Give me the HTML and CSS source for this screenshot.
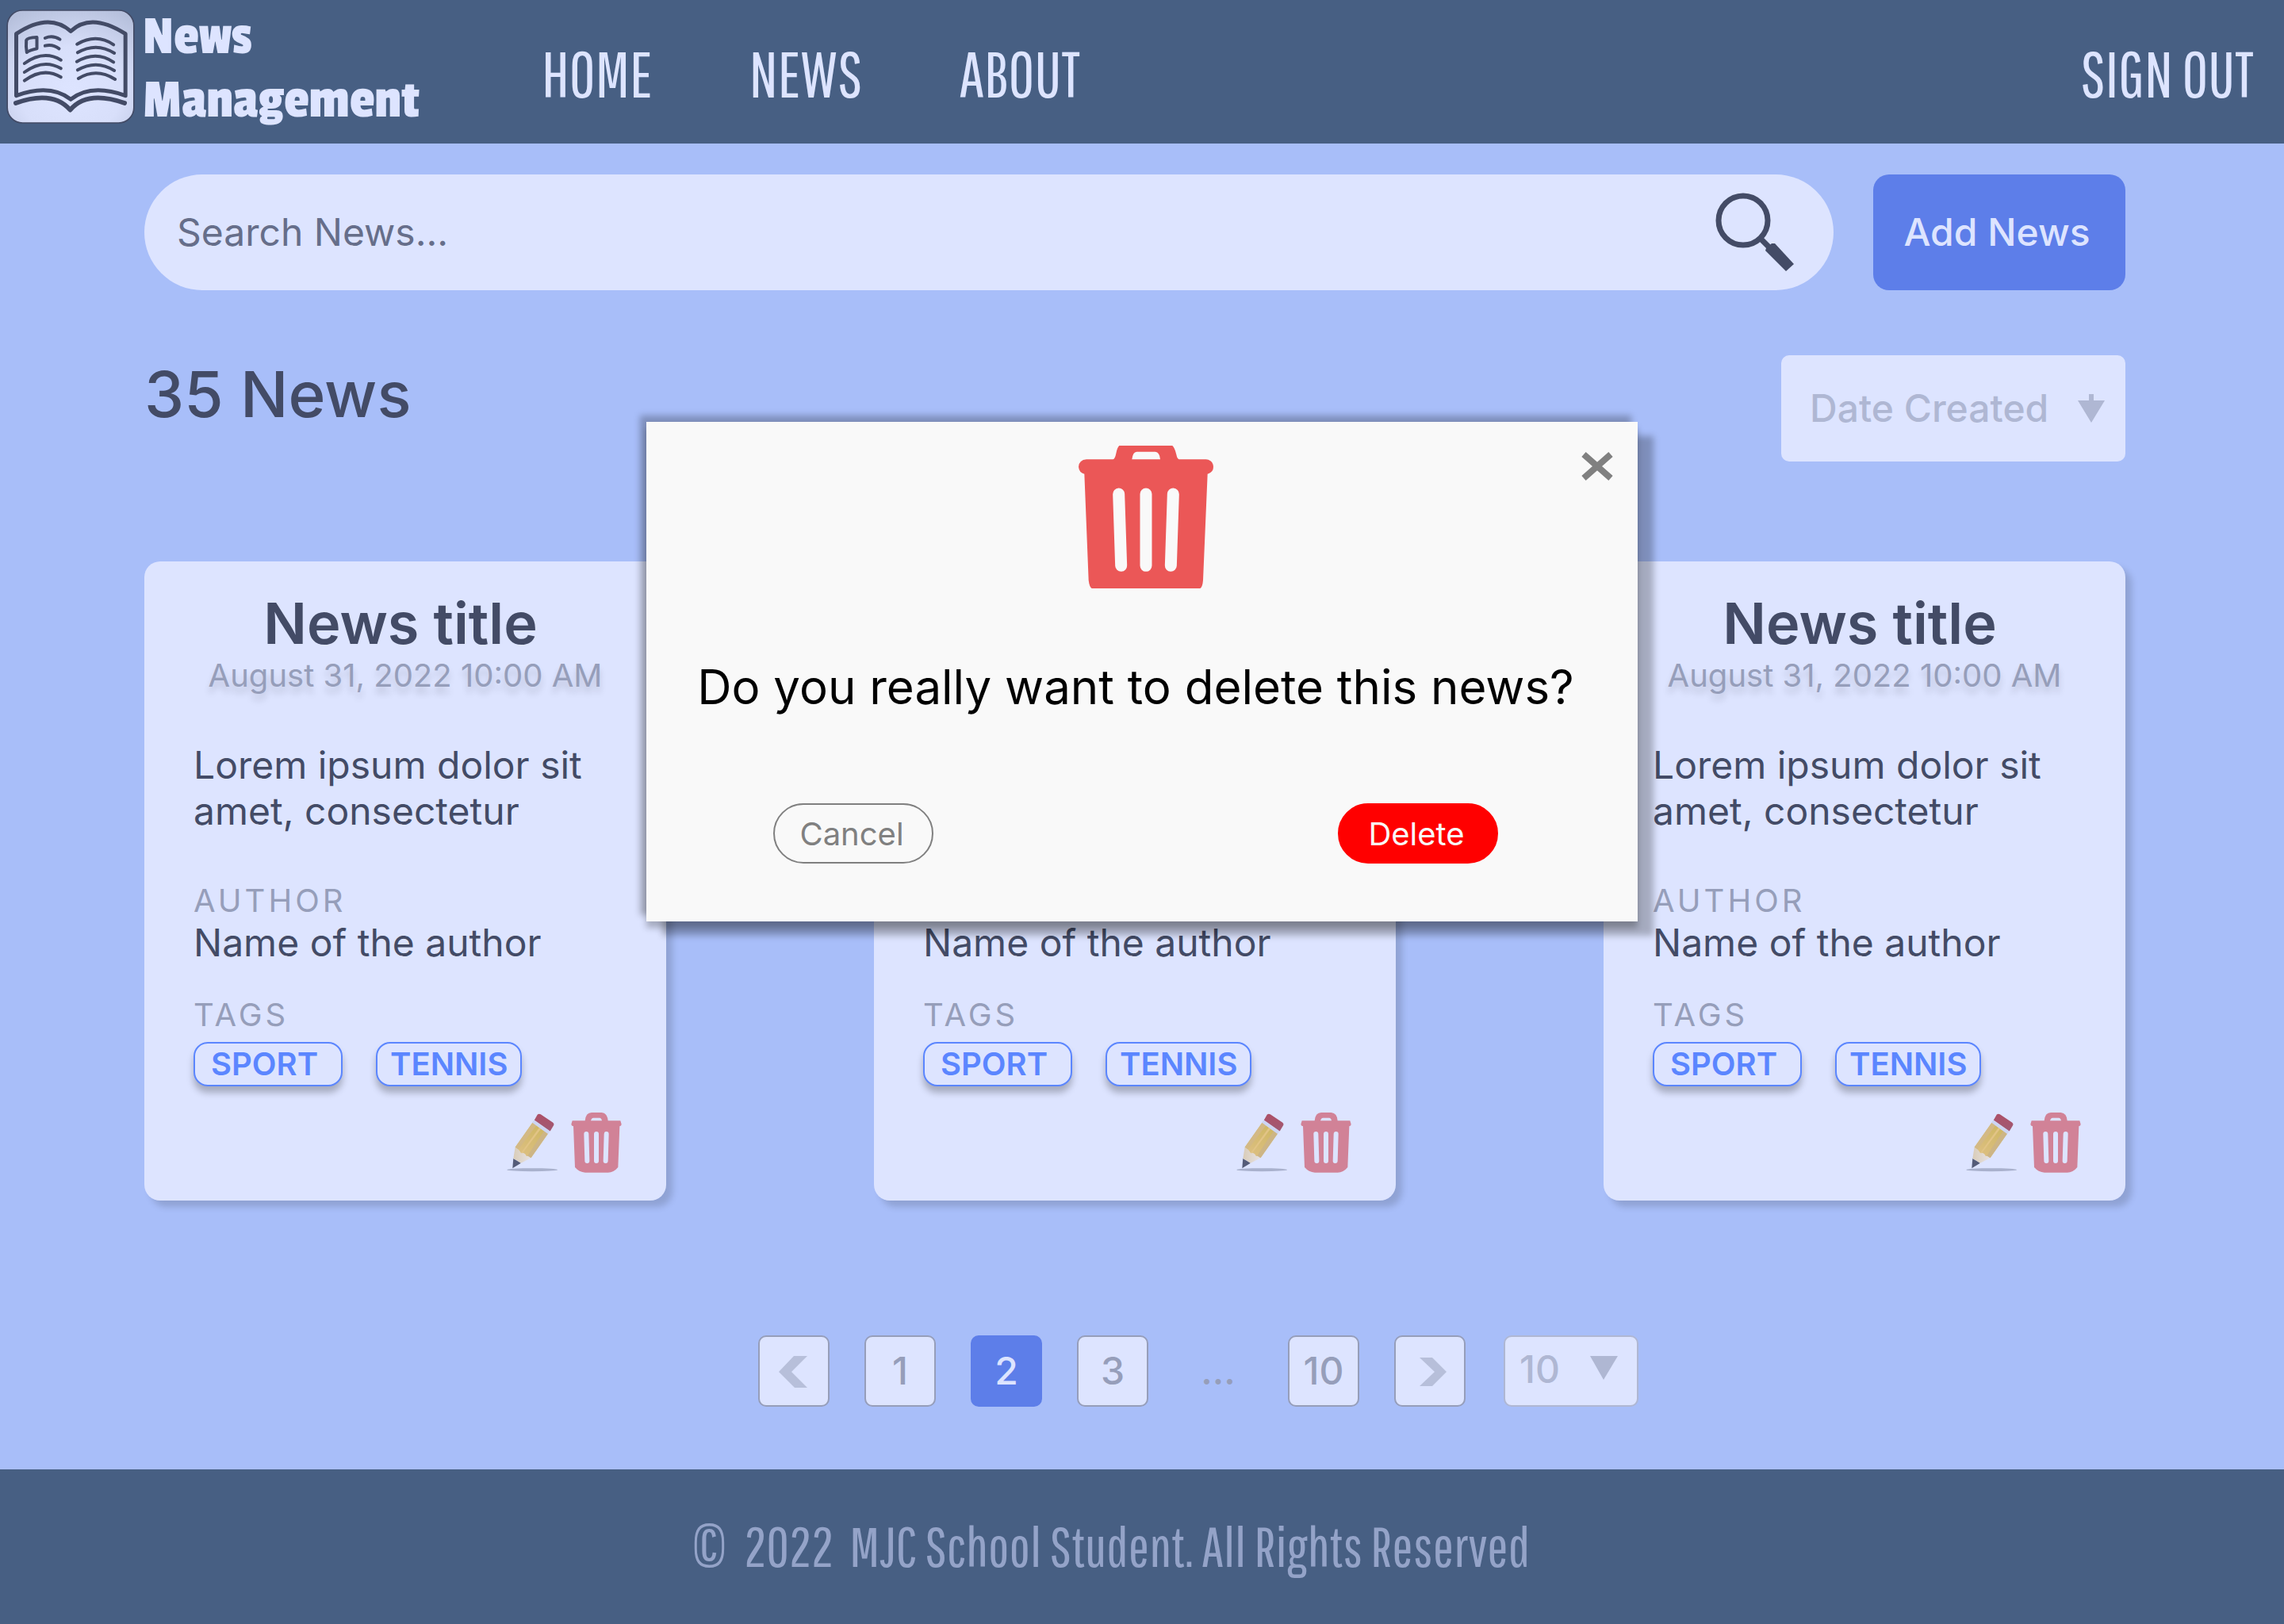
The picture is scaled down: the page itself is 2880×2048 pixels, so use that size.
FILE: index.html
```html
<!DOCTYPE html>
<html lang="en">
<head>
<meta charset="utf-8">
<meta name="viewport" content="width=device-width, initial-scale=1">
<title>News Management</title>
<link rel="stylesheet" href="styles.css">
</head>
<body>
<svg class="sprite" aria-hidden="true">
  <defs>
    <linearGradient id="wood" x1="0" y1="0" x2="1" y2="0"><stop offset="0" stop-color="#d9ccb8"/><stop offset="1" stop-color="#e6e2e4"/></linearGradient>
    <linearGradient id="shaft" gradientUnits="userSpaceOnUse" x1="185" y1="125" x2="115" y2="235"><stop offset="0" stop-color="#cfb765"/><stop offset="1" stop-color="#dcbf80"/></linearGradient>
    <linearGradient id="rubber" x1="0" y1="0" x2="0" y2="1"><stop offset="0" stop-color="#ad5067"/><stop offset="1" stop-color="#a05a74"/></linearGradient>
  </defs>
  <symbol id="pencil" viewBox="58 76 196 228">
    <ellipse cx="155" cy="293" rx="96" ry="6" fill="#a9b1cd"/>
    <path d="M83 250 112 268 80 287Z" fill="#555c78"/>
    <path d="M90 207 150 248 112 268Q98 256 83 250Z" fill="url(#wood)"/>
    <path d="M156 114 215 155 150 248Q144 238 133 241 126 227 112 229 106 216 90 207Z" fill="url(#shaft)"/>
    <path d="M156 114 171 124 102 216 90 207Z" fill="#d3b985"/>
    <path d="M200 145 215 155 150 248 137 240Z" fill="#cdb585"/>
    <path d="M182 132 188 137 118 230 112 229Z" fill="#e2c486"/>
    <path d="M161 104 222 147 215 157 155 114Z" fill="#ccd5f3"/>
    <path d="M175 83Q180 79 187 82L233 113Q239 117 237 123L223 146 163 104Z" fill="url(#rubber)"/>
  </symbol>
  <symbol id="bin" viewBox="300 64 192 232">
    <path fill-rule="evenodd" d="M308 97H353Q356 66 378 66H416Q438 68 440 97H487L491 110Q491 117 484 118L478 273Q462 293 440 293H354Q330 291 315 273L309 118Q301 117 301 110L305 97ZM375 97H417Q415 86 408 86H385Q377 87 375 97Z" fill="#d18297"/>
    <path d="M358 147 361 249M396 147V249M434 147 431 249" stroke="#dde4ff" stroke-width="18" stroke-linecap="round"/>
  </symbol>
</svg>

<header class="header">
  <a class="brand" href="#">
    <svg class="brand-icon" viewBox="25 36 485 432" aria-hidden="true">
      <defs><radialGradient id="page" cx=".5" cy=".72" r=".8"><stop offset="0" stop-color="#dde4ff"/><stop offset=".5" stop-color="#d8dffa"/><stop offset="1" stop-color="#b6c0dc"/></radialGradient></defs>
      <rect x="28" y="39" width="479" height="426" rx="58" fill="url(#page)" stroke="#434b66" stroke-width="5"/>
      <g fill="none" stroke="#434b66" stroke-linecap="round" stroke-linejoin="round">
        <path stroke-width="15" d="M62 362V128Q185 45 268 118Q345 45 475 128V362Q345 315 268 376Q190 315 62 362Z"/>
        <path stroke-width="17" d="M60 390Q200 340 266 416Q330 340 472 390"/>
        <path stroke-width="12" d="M100 152Q104 142 140 141V184Q112 190 102 198 98 178 100 152ZM171 144Q200 132 227 149M171 173Q200 166 224 184M93 240Q165 188 231 227M93 273Q165 221 231 259M93 305Q165 252 231 292M292 167Q365 125 430 169M294 199Q365 158 433 201M291 233Q365 190 430 235M294 265Q365 224 433 267M297 297Q365 255 436 300"/>
      </g>
    </svg>
    <span class="brand-name">News<br>Management</span>
  </a>
  <nav class="nav" aria-label="Main">
    <a href="#">HOME</a>
    <a href="#">NEWS</a>
    <a href="#">ABOUT</a>
  </nav>
  <a class="sign-out" href="#">SIGN OUT</a>
</header>

<main class="main">
  <div class="search-row">
    <form class="search" role="search">
      <input class="search-input" type="text" placeholder="Search News..." aria-label="Search news">
      <button class="icon-button" type="button" aria-label="Search">
        <svg width="102" height="102" viewBox="2162 242 102 102" aria-hidden="true">
          <circle cx="2198" cy="278" r="31" fill="none" stroke="#434b66" stroke-width="7"/>
          <path d="M2220 301 2234 315" stroke="#434b66" stroke-width="7"/>
          <path d="M2226 316 2227 313 2234 307 2238 307 2262 333 2252 342Z" fill="#434b66"/>
        </svg>
      </button>
    </form>
    <button class="add-button" type="button">Add News</button>
  </div>

  <div class="toolbar">
    <h1 class="count">35 News</h1>
    <div class="select-wrap sort">
      <select class="select" aria-label="Sort by"><option>Date Created</option></select>
      <svg class="select-arrow" width="34" height="36" viewBox="0 0 34 36" aria-hidden="true"><path d="M0 8H14V0H20V8H34L17 36Z" fill="#afb7d3"/></svg>
    </div>
  </div>

  <div class="cards">
    <article class="card">
      <h2 class="card-title">News title</h2>
      <time class="card-date">August 31, 2022 10:00 AM</time>
      <p class="card-text">Lorem ipsum dolor sit amet, consectetur</p>
      <h3 class="card-label">AUTHOR</h3>
      <p class="card-author">Name of the author</p>
      <h3 class="card-label">TAGS</h3>
      <ul class="tags"><li class="tag tag-wide">SPORT</li><li class="tag">TENNIS</li></ul>
      <div class="card-actions">
        <button class="icon-button" type="button" aria-label="Edit"><svg width="65" height="76"><use href="#pencil"/></svg></button>
        <button class="icon-button" type="button" aria-label="Delete"><svg width="64" height="78"><use href="#bin"/></svg></button>
      </div>
    </article>
    <article class="card">
      <h2 class="card-title">News title</h2>
      <time class="card-date">August 31, 2022 10:00 AM</time>
      <p class="card-text">Lorem ipsum dolor sit amet, consectetur</p>
      <h3 class="card-label">AUTHOR</h3>
      <p class="card-author">Name of the author</p>
      <h3 class="card-label">TAGS</h3>
      <ul class="tags"><li class="tag tag-wide">SPORT</li><li class="tag">TENNIS</li></ul>
      <div class="card-actions">
        <button class="icon-button" type="button" aria-label="Edit"><svg width="65" height="76"><use href="#pencil"/></svg></button>
        <button class="icon-button" type="button" aria-label="Delete"><svg width="64" height="78"><use href="#bin"/></svg></button>
      </div>
    </article>
    <article class="card">
      <h2 class="card-title">News title</h2>
      <time class="card-date">August 31, 2022 10:00 AM</time>
      <p class="card-text">Lorem ipsum dolor sit amet, consectetur</p>
      <h3 class="card-label">AUTHOR</h3>
      <p class="card-author">Name of the author</p>
      <h3 class="card-label">TAGS</h3>
      <ul class="tags"><li class="tag tag-wide">SPORT</li><li class="tag">TENNIS</li></ul>
      <div class="card-actions">
        <button class="icon-button" type="button" aria-label="Edit"><svg width="65" height="76"><use href="#pencil"/></svg></button>
        <button class="icon-button" type="button" aria-label="Delete"><svg width="64" height="78"><use href="#bin"/></svg></button>
      </div>
    </article>
  </div>

  <nav class="pagination" aria-label="Pages">
    <button class="page" type="button" aria-label="Previous page"><svg width="86" height="86" viewBox="2 2 86 86" aria-hidden="true"><path d="M45 26H62L42 46 62 66H46L26 46Z" fill="#b7bfda"/></svg></button>
    <button class="page" type="button">1</button>
    <button class="page page-current" type="button" aria-current="page">2</button>
    <button class="page" type="button">3</button>
    <span class="page-gap">...</span>
    <button class="page" type="button">10</button>
    <button class="page" type="button" aria-label="Next page"><svg width="86" height="86" viewBox="2 2 86 86" aria-hidden="true"><path d="M32 28H48L66 46 48 64H32L51 46Z" fill="#b7bfda"/></svg></button>
    <div class="select-wrap page-size">
      <select class="select" aria-label="News per page"><option>10</option></select>
      <svg class="select-arrow" width="35" height="30" viewBox="0 0 35 30" aria-hidden="true"><path d="M0 0H35L17 30Z" fill="#afb7d3"/></svg>
    </div>
  </nav>
</main>

<footer class="footer"><span class="copyright">©</span>&nbsp; 2022&nbsp; MJC School Student. All Rights Reserved</footer>

<div class="overlay">
  <section class="dialog" role="dialog" aria-modal="true" aria-labelledby="dialog-message">
    <button class="icon-button dialog-close" type="button" aria-label="Close"><svg width="42" height="38" viewBox="0 0 42 38" aria-hidden="true"><path d="M4 4 38 34M38 4 4 34" stroke="#808080" stroke-width="8"/></svg></button>
    <svg class="dialog-icon" viewBox="60 66 510 540" aria-hidden="true">
      <path fill-rule="evenodd" d="M82 173 98 575Q101 600 110 606H520Q529 600 531 575L548 173Q570 166 570 146 568 120 542 118H440Q433 116 430 100 424 74 415 66H214Q206 74 202 95 198 116 190 118H90Q62 120 60 146 62 168 82 173ZM262 118Q265 90 280 89H350Q367 91 369 118Z" fill="#eb5757"/>
      <path d="M212 249 221 520M315 249V520M418 249 409 520" stroke="#f9f9f9" stroke-width="45" stroke-linecap="round"/>
    </svg>
    <div class="dialog-body">
      <p class="dialog-message" id="dialog-message">Do you really want to delete this news?</p>
      <div class="dialog-actions">
        <button class="dialog-button" type="button">Cancel</button>
        <button class="dialog-button dialog-button-danger" type="button">Delete</button>
      </div>
    </div>
  </section>
</div>
</body>
</html>
```
FILE: styles.css
```css
:root {
  --sky: #a8bef9;
  --steel: #475f83;
  --paper: #dde4ff;
  --ink: #434b66;
  --muted: #969eba;
  --accent: #5d7ee9;
  --tag: #5b86ff;
}

* { box-sizing: border-box; margin: 0; padding: 0; }

body {
  position: relative;
  min-height: 100vh;
  display: flex;
  flex-direction: column;
  background: var(--sky);
  color: var(--ink);
  font-family: Inter, "Open Sans", sans-serif;
  font-optical-sizing: none;
  font-size: 48px;
  line-height: 58px;
}

button, input, select { font: inherit; font-optical-sizing: none; color: inherit; border: 0; }
button { cursor: pointer; }
a { color: inherit; text-decoration: none; }
svg { display: block; }

.sprite { position: absolute; width: 0; height: 0; }
.icon-button { background: none; }

/* Header */
.header {
  display: flex;
  align-items: center;
  padding: 7px 38px 3px 8px;
  min-height: 181px;
  background: var(--steel);
  color: var(--paper);
  font-family: "Pathway Gothic One", "Open Sans Condensed", sans-serif;
  font-size: 80px;
  line-height: 98px;
}
.brand { display: flex; align-items: flex-start; align-self: flex-start; gap: 10px; }
.brand-icon { width: 162px; height: 144px; margin-top: 5px; }
.brand-name {
  font-family: "Passion One", Lato, sans-serif;
  font-size: 72px;
  line-height: 80px;
}
.nav { display: flex; gap: 122px; margin-left: 154px; }
.sign-out { margin-left: auto; }

/* Page body */
.main { flex: 1; padding: 39px 200px 76px 182px; }

.search-row { display: flex; gap: 50px; }
.search {
  flex: 1;
  display: flex;
  align-items: center;
  height: 146px;
  padding: 0 48px 0 41px;
  border-radius: 73px;
  background: var(--paper);
}
.search-input { flex: 1; min-width: 0; height: 58px; background: none; outline: 0; }
.search-input::placeholder { color: #666e8a; opacity: 1; }
.add-button {
  width: 318px;
  padding-right: 6px;
  border-radius: 20px;
  background: var(--accent);
  color: var(--paper);
  font-weight: 500;
}

.toolbar {
  display: flex;
  justify-content: space-between;
  align-items: flex-start;
  margin-top: 82px;
}
.count { font-size: 80px; line-height: 98px; font-weight: 500; }

.select-wrap { position: relative; color: #afb7d3; }
.select {
  display: block;
  width: 100%;
  height: 100%;
  appearance: none;
  border-radius: 10px;
  background: var(--paper);
  font-weight: 500;
}
.select-arrow { position: absolute; top: 0; bottom: 0; right: 26px; margin: auto 0; pointer-events: none; }
.sort { width: 434px; height: 134px; }
.sort .select { padding-left: 36px; }

/* Cards */
.cards {
  display: flex;
  justify-content: space-between;
  margin-top: 126px;
}
.card {
  width: 658px;
  padding: 36px 62px 34px;
  border-radius: 20px;
  background: var(--paper);
  box-shadow: 8px 8px 8px rgba(0, 0, 0, 0.15);
}
.card-title { padding-right: 12px; font-size: 72px; line-height: 84px; font-weight: 600; text-align: center; }
.card-date {
  display: block;
  font-size: 40px;
  line-height: 48px;
  text-align: center;
  color: var(--muted);
  text-shadow: 0 8px 8px rgba(0, 0, 0, 0.15);
}
.card-text { margin: 60px 0; }
.card-label {
  font-size: 40px;
  line-height: 48px;
  font-weight: 400;
  letter-spacing: 4px;
  color: var(--muted);
}
.card-author { margin-bottom: 38px; }
.tags { display: flex; gap: 42px; margin-top: 10px; list-style: none; }
.tag {
  padding: 0 16px;
  border: 2px solid var(--tag);
  border-radius: 18px;
  color: var(--tag);
  font-size: 40px;
  line-height: 52px;
  font-weight: 600;
  background: var(--paper);
  box-shadow: 0 8px 8px rgba(0, 0, 0, 0.25);
}
.tag-wide { width: 188px; padding-left: 20px; }
.card-actions { display: flex; justify-content: flex-end; gap: 16px; margin: 32px -6px 0 0; }

/* Pagination */
.pagination {
  display: flex;
  justify-content: center;
  gap: 44px;
  margin-top: 170px;
  padding-left: 160px;
}
.page {
  width: 90px;
  height: 90px;
  border: 2px solid #969eba;
  border-radius: 10px;
  background: var(--paper);
  color: #969eba;
  font-weight: 500;
}
.page-current { border-color: var(--accent); background: var(--accent); color: var(--paper); }
.page-gap { width: 88px; line-height: 90px; text-align: center; color: #969eba; font-weight: 500; }
.page-size { width: 170px; height: 90px; margin-left: 4px; }
.page-size .select { padding: 0 0 4px 18px; border: 2px solid #afb7d3; }
.page-size .select-arrow { bottom: 8px; }

/* Footer */
.footer {
  padding: 48px 80px 49px 0;
  background: var(--steel);
  color: #94a3c8;
  font-family: "Pathway Gothic One", "Open Sans Condensed", sans-serif;
  font-size: 70px;
  line-height: 98px;
  text-align: center;
}
.copyright { font-size: 90px; line-height: 0; vertical-align: -20px; }

/* Delete confirmation */
.overlay {
  position: absolute;
  inset: 0;
  display: flex;
  justify-content: center;
  align-items: flex-start;
  padding-top: 532px;
}
.dialog {
  position: relative;
  width: 1250px;
  padding: 30px 0 73px;
  background: #f9f9f9;
  box-shadow:
    0 8px 8px rgba(0, 0, 0, 0.25),
    20px 18px 8px rgba(0, 0, 0, 0.25),
    -8px -8px 8px rgba(0, 0, 0, 0.25);
}
.dialog-icon { width: 180px; height: 180px; margin: 0 auto; padding-left: 10px; }
.dialog-close { position: absolute; top: 37px; right: 30px; }
.dialog-body { padding-right: 16px; }
.dialog-message {
  margin-top: 88px;
  font-size: 60px;
  line-height: 72px;
  color: #000;
  text-align: center;
}
.dialog-actions { display: flex; justify-content: space-between; margin-top: 111px; padding: 0 160px; }
.dialog-button {
  width: 202px;
  height: 76px;
  padding: 2px 4px 0 0;
  border: 2px solid #808080;
  border-radius: 38px;
  background: none;
  color: #808080;
  font-size: 40px;
  line-height: 48px;
}
.dialog-button-danger { border-color: #f00; background: #f00; color: #f9f9f9; }
```
